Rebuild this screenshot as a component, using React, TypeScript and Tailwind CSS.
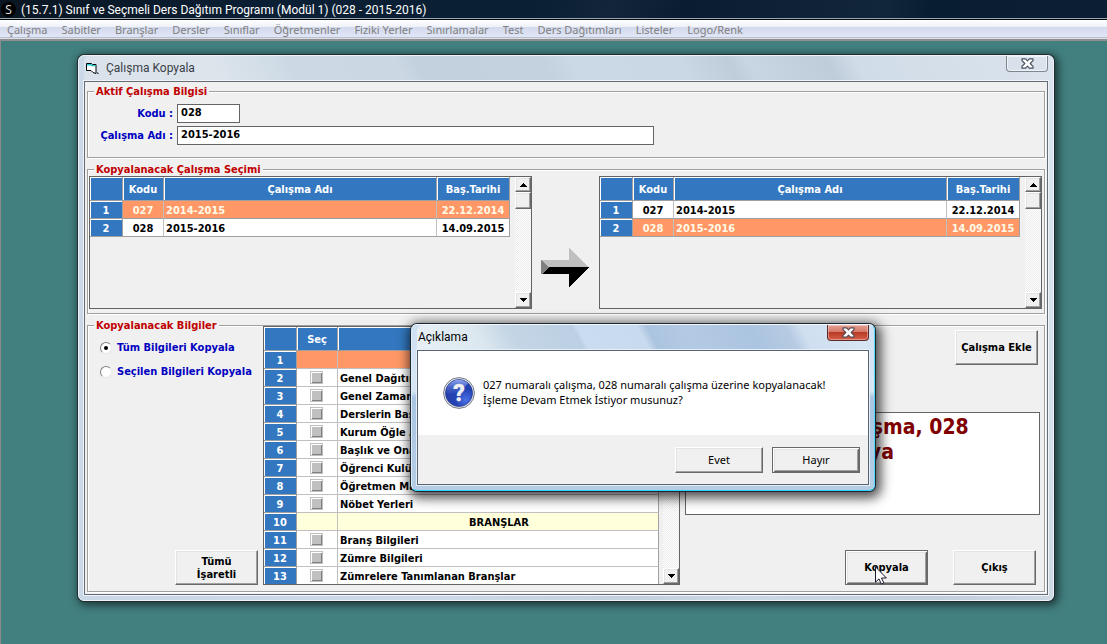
import React, { useState } from 'react';
import clsx from 'clsx';

const menuItems = [
  'Çalışma',
  'Sabitler',
  'Branşlar',
  'Dersler',
  'Sınıflar',
  'Öğretmenler',
  'Fiziki Yerler',
  'Sınırlamalar',
  'Test',
  'Ders Dağıtımları',
  'Listeler',
  'Logo/Renk',
];

const works = [
  { code: '027', name: '2014-2015', date: '22.12.2014' },
  { code: '028', name: '2015-2016', date: '14.09.2015' },
];

type InfoRow = { label: string; kind: 'selected' | 'item' | 'heading' };

const infoRows: InfoRow[] = [
  { label: '', kind: 'selected' },
  { label: 'Genel Dağıtım', kind: 'item' },
  { label: 'Genel Zaman', kind: 'item' },
  { label: 'Derslerin Baş', kind: 'item' },
  { label: 'Kurum Öğle Ar', kind: 'item' },
  { label: 'Başlık ve Onay', kind: 'item' },
  { label: 'Öğrenci Kulüp', kind: 'item' },
  { label: 'Öğretmen Ma', kind: 'item' },
  { label: 'Nöbet Yerleri', kind: 'item' },
  { label: 'BRANŞLAR', kind: 'heading' },
  { label: 'Branş Bilgileri', kind: 'item' },
  { label: 'Zümre Bilgileri', kind: 'item' },
  { label: 'Zümrelere Tanımlanan Branşlar', kind: 'item' },
];

// Raised 3D edge shared by buttons and scroll bar parts
const raised =
  'border border-t-white border-l-white border-r-[#696969] border-b-[#696969] shadow-[inset_-1px_-1px_0_#a0a0a0,inset_1px_1px_0_#e3e3e3] bg-[#f0f0f0]';

type ButtonProps = {
  children: React.ReactNode;
  className?: string;
  isDefault?: boolean;
  onClick?: () => void;
};

const ClassicButton: React.FC<ButtonProps> = ({ children, className, isDefault, onClick }) => (
  <button
    type="button"
    onClick={onClick}
    className={clsx(
      'relative shrink-0 text-center text-black',
      isDefault
        ? 'border border-[#696969] bg-[#f0f0f0] shadow-[inset_1px_1px_0_#fff,inset_-1px_-1px_0_#696969,inset_2px_2px_0_#e3e3e3,inset_-2px_-2px_0_#a0a0a0]'
        : raised,
      className
    )}
  >
    {children}
  </button>
);

const GroupBox: React.FC<{ title: string; children: React.ReactNode }> = ({ title, children }) => (
  <fieldset className="min-w-0 border border-[#a0a0a0] shadow-[1px_1px_0_#fff,inset_1px_1px_0_#fff]">
    <legend className="ml-1.5 h-[14px] bg-[#f0f0f0] px-0.5 leading-4 text-[#c00000]">{title}</legend>
    {children}
  </fieldset>
);

const ScrollBar: React.FC = () => (
  <div className="flex w-4 shrink-0 flex-col bg-[repeating-conic-gradient(#ffffff_0_25%,#ebebeb_0_50%)] bg-[length:2px_2px]">
    <button type="button" aria-label="Yukarı" className={clsx('flex h-[15px] items-center justify-center', raised)}>
      <svg className="h-1 w-[7px]" viewBox="0 0 7 4" shapeRendering="crispEdges">
        <path d="M3 0h1v1h1v1h1v1h1v1H0V3h1V2h1V1h1z" fill="#000" />
      </svg>
    </button>
    <div className={clsx('h-[17px]', raised)} />
    <button
      type="button"
      aria-label="Aşağı"
      className={clsx('mt-auto flex h-4 items-center justify-center', raised)}
    >
      <svg className="h-1 w-[7px]" viewBox="0 0 7 4" shapeRendering="crispEdges">
        <path d="M0 0h7v1H6v1H5v1H4v1H3V3H2V2H1V1H0z" fill="#000" />
      </svg>
    </button>
  </div>
);

const headCell =
  'border-r border-b border-[#a0a0a0] bg-[#3277bf] px-0 pt-0.5 pb-0 text-center font-bold text-white shadow-[inset_1px_1px_0_#fff]';

const WorkTable: React.FC<{ selected: string }> = ({ selected }) => (
  <div className="flex h-[133px] min-w-0 flex-1 border border-[#646464]">
    <div className="min-w-0 flex-1 pr-[5px]">
      <table className="w-full table-fixed border-separate border-spacing-0">
        <thead>
          <tr className="h-6">
            <th className={clsx('w-[33px]', headCell)} />
            <th className={clsx('w-[41px]', headCell)}>Kodu</th>
            <th className={headCell}>Çalışma Adı</th>
            <th className={clsx('w-[73px]', headCell)}>Baş.Tarihi</th>
          </tr>
        </thead>
        <tbody>
          {works.map((work, i) => (
            <tr
              key={work.code}
              className={clsx('h-[18px]', work.code === selected ? 'bg-[#ff9866] text-[#fffae8]' : 'bg-white text-black')}
            >
              <th className={headCell}>{i + 1}</th>
              <td className="border-r border-b border-r-[#c0c0c0] border-b-[#a0a0a0] px-0 pt-0.5 pb-0 text-center">
                {work.code}
              </td>
              <td className="border-r border-b border-r-[#c0c0c0] border-b-[#a0a0a0] pt-0.5 pr-0 pb-0 pl-0.5">
                {work.name}
              </td>
              <td className="border-r border-b border-[#a0a0a0] px-0 pt-0.5 pb-0 text-center">{work.date}</td>
            </tr>
          ))}
        </tbody>
      </table>
    </div>
    <ScrollBar />
  </div>
);

const InfoTable: React.FC = () => (
  <div className="flex h-[259px] w-[417px] shrink-0 overflow-hidden border border-[#646464]">
    <div className="min-w-0 flex-1 pr-1">
      <table className="w-full table-fixed border-separate border-spacing-0">
        <thead>
          <tr className="h-6">
            <th className={clsx('w-[33px]', headCell)} />
            <th className={clsx('w-[41px]', headCell)}>Seç</th>
            <th className={headCell} />
          </tr>
        </thead>
        <tbody>
          {infoRows.map((row, i) => (
            <tr
              key={i}
              className={clsx(
                'h-[18px]',
                row.kind === 'selected' && 'bg-[#ff9866]',
                row.kind === 'heading' && 'bg-[#ffffdc]',
                row.kind === 'item' && 'bg-white'
              )}
            >
              <th className={headCell}>{i + 1}</th>
              <td className="border-r border-b border-[#c0c0c0] py-0 pr-0 pl-[13px]">
                {row.kind === 'item' && (
                  <input
                    type="checkbox"
                    aria-label={row.label}
                    className="block size-[13px] appearance-none border border-[#c0c0c0] bg-[#c0c0c0] shadow-[inset_1px_1px_0_#fff,inset_-1px_-1px_0_#808080] checked:bg-[#606060]"
                  />
                )}
              </td>
              <td
                className={clsx(
                  'truncate border-r border-b border-r-[#a0a0a0] border-b-[#c0c0c0] pt-0.5 pr-0 pb-0 pl-0.5',
                  row.kind === 'heading' && 'text-center'
                )}
              >
                {row.label}
              </td>
            </tr>
          ))}
        </tbody>
      </table>
    </div>
    <ScrollBar />
  </div>
);

const RightArrow: React.FC = () => (
  <svg className="h-[39px] w-[49px]" viewBox="0 0 49 39" shapeRendering="crispEdges">
    <path d="M0 12H28V0L48 19H8z" fill="#c0c0c0" />
    <path d="M8 19H48L28 39V26H2z" fill="#000" />
    <path d="M0 12L8 19L2 26H0z" fill="#808080" />
  </svg>
);

const CloseGlyph: React.FC<{ color: string }> = ({ color }) => (
  <svg className="h-[11px] w-[13px]" viewBox="0 0 13 11">
    <path
      d="M1 .8H4.6L6.5 2.8L8.4 .8H12V2.6L9.2 5.5L12 8.4V10.2H8.4L6.5 8.2L4.6 10.2H1V8.4L3.8 5.5L1 2.6z"
      fill="#fff"
      stroke={color}
      strokeWidth="1.2"
      strokeLinejoin="round"
    />
  </svg>
);

const FormIcon: React.FC = () => (
  <svg className="h-3 w-[13px]" viewBox="0 0 13 12">
    <path d="M.5 .5H5.5L6.5 1.5H10V10.5L7 9.5L5 7.5H.5z" fill="#fff" stroke="#000" strokeWidth="1" />
    <path d="M1 1H5.4L6.4 2H9.5V3.2H5.6L4.6 2.4H1z" fill="#20c8c8" />
    <path d="M11 9H12V10H13V11H11z" fill="#666" />
  </svg>
);

const QuestionIcon: React.FC = () => (
  <svg className="size-8 shrink-0 overflow-visible" viewBox="0 0 32 32">
    <defs>
      <radialGradient id="ball" cx="0.75" cy="0.75" r="0.8">
        <stop offset="0" stopColor="#4a70e4" />
        <stop offset="0.5" stopColor="#2342b4" />
        <stop offset="1" stopColor="#2440a8" />
      </radialGradient>
      <linearGradient id="gloss" x1="0" y1="0" x2="0" y2="1">
        <stop offset="0" stopColor="#8fa6ee" />
        <stop offset="1" stopColor="#3a58c8" stopOpacity="0.3" />
      </linearGradient>
    </defs>
    <circle cx="16" cy="16" r="15.4" fill="#e6e9f0" stroke="#777c86" strokeWidth="1" />
    <circle cx="16" cy="16" r="13.6" fill="url(#ball)" stroke="#1f2f78" strokeWidth="0.6" />
    <path d="M16 2.8A13.2 13.2 0 0 0 2.8 16C8 18 17 16 25 6.5A13.2 13.2 0 0 0 16 2.8z" fill="url(#gloss)" />
    <text
      x="16"
      y="24"
      textAnchor="middle"
      fontSize="23"
      fontWeight="700"
      fill="#f0f0f2"
      stroke="#f0f0f2"
      strokeWidth="0.6"
      fontFamily="Roboto, sans-serif"
    >
      ?
    </text>
  </svg>
);

const Pointer: React.FC = () => (
  <svg className="pointer-events-none absolute top-[15px] left-[29px] h-[19px] w-3" viewBox="0 0 12 19">
    <path
      d="M.5 .8V16.2L4 12.9L6.3 18L8.8 16.9L6.5 12H11.4z"
      fill="#fff"
      stroke="#1a1a2a"
      strokeWidth="1"
      strokeLinejoin="miter"
    />
  </svg>
);

const options = ['Tüm Bilgileri Kopyala', 'Seçilen Bilgileri Kopyala'];

const App: React.FC = () => {
  const [mode, setMode] = useState(options[0]);
  const [confirmOpen, setConfirmOpen] = useState(true);

  return (
    <div className="relative flex min-h-screen flex-col bg-[#427f7f] font-['DejaVu_Sans_Condensed','DejaVu_Sans',sans-serif] text-[11px] leading-[14px]">
      {/* Application title bar */}
      <header className="flex h-5 items-center gap-[5px] border-b border-[#05080c] bg-[linear-gradient(100deg,#0a1622_0%,#0b1f35_25%,#0a1f33_48%,#12253a_55%,#0a1d30_62%,#12263a_80%,#091d31_84%,#0c1f32_100%)] pl-[1px] font-['Roboto',sans-serif] text-[12px] text-white shadow-[inset_0_-1px_0_#9aa6b0]">
        <span className="flex size-[15px] items-center justify-center rounded-full bg-black font-['Open_Sans',sans-serif] text-[12px] text-[#e4e4e4]">
          S
        </span>
        <h1>(15.7.1) Sınıf ve Seçmeli Ders Dağıtım Programı (Modül 1) (028 - 2015-2016)</h1>
      </header>

      {/* Menu bar */}
      <nav className="flex h-[19px] items-center gap-[14px] bg-[linear-gradient(180deg,#ffffff_0%,#eef1f8_36%,#d3daed_38%,#e1e6f6_88%,#b8bfd2_92%,#f0f0f0_100%)] pl-[7px] font-['Noto_Sans',sans-serif] text-[11px] text-[#808080]">
        {menuItems.map((item) => (
          <button key={item} type="button" className="pt-px whitespace-nowrap">
            {item}
          </button>
        ))}
      </nav>

      <main className="flex-1 border-t-2 border-l border-t-[#8f8f8f] border-l-[#8a8a8a] pt-[14px] pr-[53px] pb-10 pl-[77px]">
        {/* Copy window */}
        <section className="rounded-md border border-[#eef3f8] bg-[linear-gradient(65deg,#c9d7e6_0%,#cbd9e8_30%,#c3d0de_45%,#cad8e6_55%,#c2cfdc_70%,#d5dfe9_85%,#dbe4ee_100%)] px-[5px] pb-[5px] shadow-[0_0_0_1px_#202c30,2px_2px_8px_2px_rgba(0,0,0,0.6)]">
          <div className="flex h-[25px] items-start gap-[7px] rounded-t-md bg-[linear-gradient(62deg,#d9e2ea_0%,#dde5ec_14%,#ccd9e4_22%,#cbd8e4_33%,#c3d0dd_35%,#c4d1de_48%,#cbd9e6_51%,#cad7e5_62%,#bfcddb_67%,#c8d6e3_69%,#bfccd9_77%,#d0dce8_80%,#dbe3ec_100%)] pl-0.5">
            <span className="pt-[7px]">
              <FormIcon />
            </span>
            <h2 className="pt-[5px] font-['Roboto',sans-serif] text-[12px] text-[#3a4048]">Çalışma Kopyala</h2>
            <button
              type="button"
              aria-label="Kapat"
              className="ml-auto flex h-4 w-[42px] items-center justify-center rounded-b border border-t-0 border-[#7d8790] shadow-[inset_0_0_0_1px_#eef3f7]"
            >
              <CloseGlyph color="#4a5260" />
            </button>
          </div>

          <div className="space-y-1 border border-[#646c78] bg-[#f0f0f0] p-0.5 font-bold shadow-[0_0_0_1px_#f0f4f8]">
            <GroupBox title="Aktif Çalışma Bilgisi">
              <div className="grid grid-cols-[85px_minmax(0,477px)] items-center gap-x-1 gap-y-[3px] pt-1.5 pb-3">
                <label htmlFor="kodu" className="text-right text-[#0000c0]">
                  Kodu :
                </label>
                <input
                  id="kodu"
                  readOnly
                  defaultValue="028"
                  className="h-[19px] w-[63px] border border-[#646464] bg-white px-[3px] pb-0.5 text-black"
                />
                <label htmlFor="adi" className="text-right text-[#0000c0]">
                  Çalışma Adı :
                </label>
                <input
                  id="adi"
                  readOnly
                  defaultValue="2015-2016"
                  className="h-[19px] w-full border border-[#646464] bg-white px-[3px] pb-0.5 text-black"
                />
              </div>
            </GroupBox>

            <GroupBox title="Kopyalanacak Çalışma Seçimi">
              <div className="flex pr-0.5 pb-1 pl-px">
                <WorkTable selected="027" />
                <div className="flex w-[67px] shrink-0 items-center justify-center pt-[50px]">
                  <RightArrow />
                </div>
                <WorkTable selected="028" />
              </div>
            </GroupBox>

            <GroupBox title="Kopyalanacak Bilgiler">
              <div className="-mt-1.5 flex pb-1.5">
                <div className="flex w-[175px] shrink-0 flex-col pt-[14px] pl-3">
                  <div className="flex flex-col gap-2">
                    {options.map((option) => (
                      <label key={option} className="flex h-4 items-center gap-[5px] whitespace-nowrap text-[#0000c0]">
                        <input
                          type="radio"
                          name="mode"
                          checked={mode === option}
                          onChange={() => setMode(option)}
                          className="flex size-3 appearance-none items-center justify-center rounded-full border border-t-[#808080] border-r-[#e8e8e8] border-b-[#e8e8e8] border-l-[#808080] bg-white checked:before:size-1 checked:before:rounded-full checked:before:bg-black"
                        />
                        {option}
                      </label>
                    ))}
                  </div>
                  <ClassicButton className="mt-auto mr-[5px] h-[35px] w-[83px] self-end leading-[13px]">
                    Tümü
                    <br />
                    İşaretli
                  </ClassicButton>
                </div>

                <InfoTable />

                <div className="flex min-w-0 flex-1 flex-col pt-1 pl-[5px]">
                  <ClassicButton className="mr-1.5 h-[35px] w-[83px] self-end">Çalışma Ekle</ClassicButton>
                  <textarea
                    readOnly
                    aria-label="Bilgi"
                    defaultValue={'027 numaralı çalışma, 028\nnumaralı çalışmaya'}
                    className="mt-[47px] mr-1 block h-[103px] resize-none overflow-hidden border border-[#646464] bg-white px-0.5 pt-0.5 text-[21px] leading-[25px] text-[#800000]"
                  />
                  <div className="mt-auto flex justify-end gap-[25px] pr-2">
                    <ClassicButton isDefault className="h-[35px] w-[83px]" onClick={() => setConfirmOpen(true)}>
                      Kopyala
                      <Pointer />
                    </ClassicButton>
                    <ClassicButton className="h-[35px] w-[83px]">Çıkış</ClassicButton>
                  </div>
                </div>
              </div>
            </GroupBox>
          </div>
        </section>
      </main>

      {/* Confirmation dialog, floats over the copy window */}
      {confirmOpen && (
        <div
          role="dialog"
          aria-labelledby="confirm-title"
          className="absolute top-[324px] left-[411px] w-[464px] rounded-md border border-t-[#f4f8fc] border-r-[#4fdcfa] border-b-[#2fd3fb] border-l-[#dcecf8] bg-[linear-gradient(180deg,#cfe0f2_0%,#d8e6f4_40%,#a9c5e2_44%,#b6cde6_100%)] px-[5px] pb-[5px] font-['Noto_Sans',sans-serif] text-black shadow-[0_0_0_1px_#1c2733,2px_3px_12px_4px_rgba(0,0,0,0.7)]"
        >
          <div className="flex h-[25px] items-start rounded-t-md bg-[linear-gradient(62deg,#e8f0f6_0%,#dbe7ef_15%,#c4d5e5_22%,#bcd0e4_36%,#cadcef_37%,#c8dbee_50%,#abc4df_52%,#b4cae4_60%,#abc4e0_74%,#b7cbe2_82%,#cfdff0_85%,#d8e6f4_100%)] pl-px">
            <h2 id="confirm-title" className="pt-[5px] font-['Roboto',sans-serif] text-[12px]">
              Açıklama
            </h2>
            <button
              type="button"
              aria-label="Kapat"
              onClick={() => setConfirmOpen(false)}
              className="ml-auto flex h-4 w-[42px] items-center justify-center rounded-b border border-t-0 border-[#5c2a2a] bg-[linear-gradient(180deg,#e3a193_0%,#d4796a_45%,#b83a24_50%,#d4604a_100%)] shadow-[inset_0_0_0_1px_rgba(255,255,255,0.35)]"
            >
              <CloseGlyph color="#5a4a55" />
            </button>
          </div>
          <div className="border border-[#5a6470] bg-white shadow-[0_0_0_1px_#e4eff8]">
            <div className="flex gap-2 px-[25px] pt-[26px] pb-[26px]">
              <QuestionIcon />
              <p className="text-[11px] leading-[15px] whitespace-nowrap">
                027 numaralı çalışma, 028 numaralı çalışma üzerine kopyalanacak!
                <br />
                İşleme Devam Etmek İstiyor musunuz?
              </p>
            </div>
            <div className="flex justify-end gap-[9px] bg-[#f0f0f0] px-2 pt-3 pb-[11px]">
              <ClassicButton className="h-[26px] w-[88px]" onClick={() => setConfirmOpen(false)}>
                Evet
              </ClassicButton>
              <ClassicButton isDefault className="h-[26px] w-[88px]" onClick={() => setConfirmOpen(false)}>
                Hayır
              </ClassicButton>
            </div>
          </div>
        </div>
      )}
    </div>
  );
};

export default App;
